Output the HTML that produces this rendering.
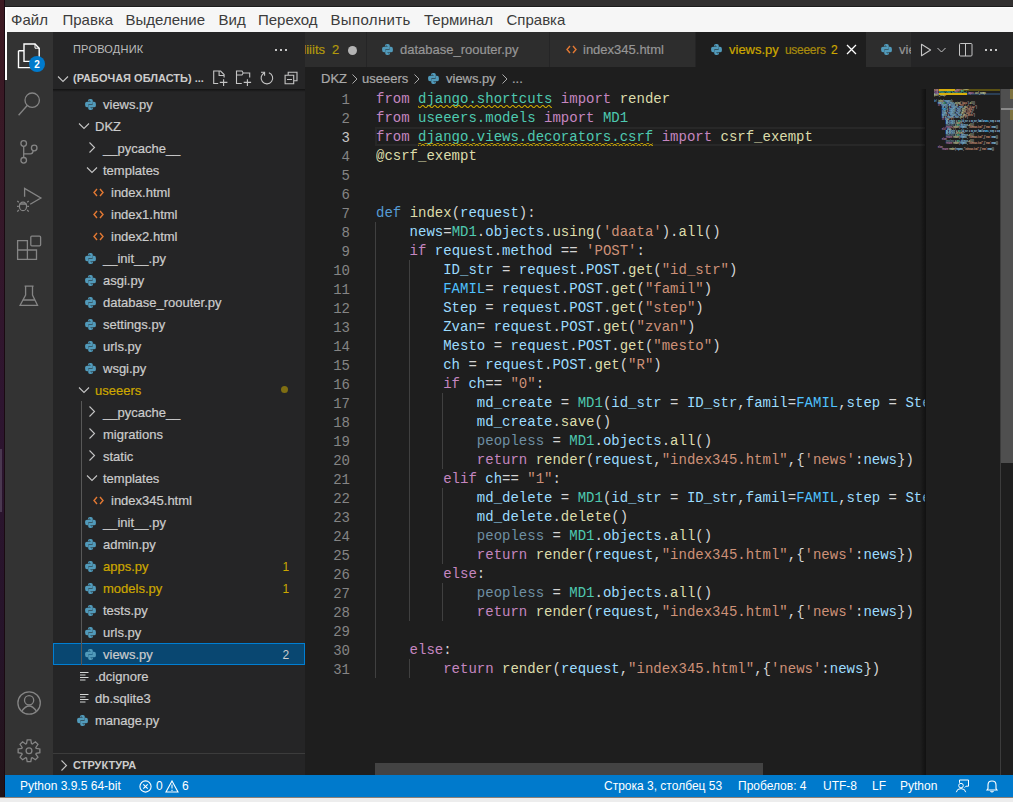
<!DOCTYPE html>
<html><head><meta charset="utf-8">
<style>
*{margin:0;padding:0;box-sizing:border-box}
html,body{width:1013px;height:802px;overflow:hidden;background:#e8e8e8;font-family:"Liberation Sans",sans-serif}
.abs{position:absolute}
.ic{position:absolute}
#leftstrip{left:0;top:0;width:5px;height:797px;background:linear-gradient(#3d1a22 0%,#361828 25%,#2e1530 50%,#26142a 80%,#221317 100%)}
#leftblk{left:0;top:449px;width:1.5px;height:63px;background:#4a3850}
#leftline{left:4px;top:0;width:1px;height:797px;background:#1a0a12}
#topstrip{left:5px;top:0;width:1008px;height:6px;background:#323030}
#topline{left:5px;top:6px;width:1008px;height:1px;background:#1c1c1c}
#menubar{left:5px;top:7px;width:1008px;height:25px;background:#f6f6f6;border-left:2px solid #fff;border-top:1px solid #fdfdfd}
#menubar span{position:absolute;top:3px;font-size:15px;color:#3c3c3c;white-space:nowrap}
#activity{left:5px;top:32px;width:48px;height:743px;background:#333333}
#sidebar{left:53px;top:32px;width:252px;height:743px;background:#252526;color:#cccccc;font-size:13px}
#editor{left:305px;top:32px;width:708px;height:743px;background:#1e1e1e}
#status{left:5px;top:775px;width:1008px;height:22px;background:#007acc;color:#fff;font-size:12px}
#status span{position:absolute;top:4px;white-space:nowrap}
#bottomstrip{left:0;top:797px;width:1013px;height:5px;background:#ededed;border-top:1px solid #8c8178}

#sidebar .hdr{position:absolute;left:20px;top:11px;font-size:11px;color:#bbbbbb;letter-spacing:0.2px}
.dots3{position:absolute;height:3px;width:14px}
.dots3 i{position:absolute;top:0;width:2px;height:2px;background:#c5c5c5}
.dots3 i:nth-child(1){left:0}.dots3 i:nth-child(2){left:5px}.dots3 i:nth-child(3){left:10px}
.wshdr{position:absolute;left:0;top:35px;width:252px;height:22px}
.wst{position:absolute;left:20px;top:5px;font-size:11px;font-weight:bold;color:#cccccc;white-space:nowrap}
.shadow{position:absolute;left:0;top:57px;width:252px;height:3px;background:linear-gradient(#121212,rgba(0,0,0,0))}
.row{position:absolute;left:0;width:252px;height:22px}
.row.sel{background:#094771;outline:1px solid #007fd4;outline-offset:-1px}
.lbl{position:absolute;top:4px;font-size:13px;color:#cccccc;white-space:nowrap;-webkit-text-stroke:0.2px currentColor}
.badge{position:absolute;left:229.5px;top:5px;font-size:12px}
.dot{position:absolute;left:228px;top:7px;width:7px;height:7px;border-radius:50%;background:#7f6e12}
.guide{position:absolute;left:28px;top:369px;width:1px;height:264px;background:#585858}
.panelhdr{position:absolute;left:0;top:721px;width:252px;height:22px;border-top:1px solid #3c3c3c}
.panelhdr span{position:absolute;left:20px;top:5px;font-size:11px;font-weight:bold;color:#cccccc}

#tabbar{position:absolute;left:0;top:0;width:708px;height:35px;background:#252526}
.tab{position:absolute;top:0;height:35px;background:#2d2d2d;overflow:hidden}
.tab.act{background:#1e1e1e}
.tt{position:absolute;top:10px;font-size:13px;color:#969696;white-space:nowrap;-webkit-text-stroke:0.2px currentColor}
.tt.small{font-size:12px;top:11px;letter-spacing:-0.3px}
.mdot{position:absolute;top:14px;width:9px;height:9px;border-radius:50%;background:#b4b4b4}
.actions{position:absolute;left:606px;top:0;width:102px;height:35px;background:#252526}
#crumbs{position:absolute;left:0;top:35px;width:708px;height:22px;background:#1e1e1e}
.cr{position:absolute;top:4px;font-size:13px;color:#a9a9a9;white-space:nowrap;-webkit-text-stroke:0.2px currentColor}
#codearea{position:absolute;left:0;top:57px;width:708px;height:686px;background:#1e1e1e;overflow:hidden}
#gutter{position:absolute;left:0;top:2px;width:45px}
.ln{height:19px;line-height:19px;text-align:right;font-family:"Liberation Mono",monospace;font-size:14px;color:#858585}
.ln.act{color:#c6c6c6}
#code{position:absolute;left:71px;top:1px;width:549px;overflow:hidden;font-family:"Liberation Mono",monospace;font-size:14px;color:#d4d4d4}
.cl{height:19px;line-height:19px;white-space:pre}
#curline{position:absolute;left:70px;top:38px;width:550px;height:19px;border:2px solid #282828;border-right:none}
.iguide{position:absolute;width:1px;background:#404040}
#mmshadow{position:absolute;left:615px;top:0;width:6px;height:686px;background:linear-gradient(90deg,rgba(0,0,0,0) 0,#000 100%);opacity:0.45}
#vscroll{position:absolute;left:695px;top:0;width:13px;height:686px;border-left:1px solid #3c3c3c}
#vscroll .slider{position:absolute;left:0;top:0;width:13px;height:374px;background:#4f4f4f}
#vscroll .ovl1{position:absolute;left:9px;top:0;width:4px;height:10px;background:#7d7240}
#vscroll .ovl2{position:absolute;left:9px;top:21px;width:4px;height:10px;background:#7d7240}
#vscroll .curpos{position:absolute;left:0;top:19px;width:13px;height:2px;background:#8a8a8a}
#hscroll{position:absolute;left:70px;top:674px;width:388px;height:12px;background:#434343}
#mmtext{position:absolute;left:629px;top:0;width:66px;height:70px;overflow:hidden}
.mmin{position:absolute;left:0;top:-0.6px;width:1000px;font-family:"Liberation Mono",monospace;font-size:14px;color:#d4d4d4;transform:scale(0.119,0.2);transform-origin:0 0;-webkit-text-stroke:1px currentColor;opacity:0.85}
.mmin .cl{height:10px;line-height:10px}
</style></head><body>
<div id="leftstrip" class="abs"></div>
<div id="leftline" class="abs"></div>
<div id="leftblk" class="abs"></div>
<div id="topstrip" class="abs"></div>
<div id="topline" class="abs"></div>
<div id="menubar" class="abs">
<span style="left:4px">Файл</span>
<span style="left:55.5px">Правка</span>
<span style="left:118.5px">Выделение</span>
<span style="left:211.5px">Вид</span>
<span style="left:251px">Переход</span>
<span style="left:323.5px;letter-spacing:0.35px">Выполнить</span>
<span style="left:417px">Терминал</span>
<span style="left:499.5px">Справка</span>
</div>

<div id="activity" class="abs">
<div style="position:absolute;left:0;top:0;width:2px;height:48px;background:#ffffff"></div>
<svg style="position:absolute;left:0;top:0" width="48" height="743" viewBox="0 0 48 743">
<g fill="none" stroke="#ffffff" stroke-width="1.4">
<path d="M13.5,18.7 V35.6 H26 M13.5,18.7 H19"/>
<path d="M19,12 H30 L34.2,16.2 V29.4 H19 Z"/>
<path d="M30,12 V16.2 H34.2" stroke-width="1"/>
</g>
<circle cx="32" cy="32" r="8" fill="#007acc"/>
<text x="32" y="35.8" font-family="Liberation Sans" font-size="10" font-weight="bold" fill="#fff" text-anchor="middle">2</text>
<g fill="none" stroke="#858585" stroke-width="1.3">
<circle cx="27.2" cy="68.2" r="7.2"/>
<path d="M22.2,73.5 L13.6,83.3"/>
<circle cx="18.7" cy="111.5" r="2.8"/>
<circle cx="18.7" cy="128.3" r="2.8"/>
<circle cx="29.2" cy="116" r="2.8"/>
<path d="M18.7,114.3 V125.5 M18.7,121.8 H25.5 Q27.7,121.8 28.2,118.8"/>
<path d="M19.6,164.8 V156.4 L35.9,166 L25.2,172.3"/>
<ellipse cx="18" cy="174.4" rx="3.6" ry="4.3"/>
<path d="M13.8,170.3 L12.3,169 M22.2,170.3 L23.7,169 M13.8,174.4 H12 M22.2,174.4 H24 M13.8,178 L12.3,179.6 M22.2,178 L23.7,179.6 M14.5,172 H21.5"/>
<path d="M12.6,208.7 H22.4 V227.3 H12.6 Z M12.6,218 H31.5 V227.3 H22.4"/>
<rect x="25.8" y="204.2" width="9.8" height="9.6" rx="1"/>
<path d="M19.6,254.2 H28.6 M20.6,254.2 V263 L15.1,273.3 H32.5 L27.5,263 V254.2 M17.4,268 H30.3"/>
<circle cx="24.1" cy="671" r="11.2"/>
<circle cx="24.1" cy="668.2" r="4.6"/>
<path d="M16.8,679 Q24.1,669 31.4,679"/>
<path d="M31.19,716.33 L34.85,716.98 L34.85,720.62 L31.19,721.27 L30.83,722.13 L32.96,725.19 L30.39,727.76 L27.33,725.63 L26.47,725.99 L25.82,729.65 L22.18,729.65 L21.53,725.99 L20.67,725.63 L17.61,727.76 L15.04,725.19 L17.17,722.13 L16.81,721.27 L13.15,720.62 L13.15,716.98 L16.81,716.33 L17.17,715.47 L15.04,712.41 L17.61,709.84 L20.67,711.97 L21.53,711.61 L22.18,707.95 L25.82,707.95 L26.47,711.61 L27.33,711.97 L30.39,709.84 L32.96,712.41 L30.83,715.47 Z"/>
<circle cx="24" cy="718.8" r="2.9"/>
</g>
</svg>
</div>

<div id="sidebar" class="abs">
<svg width="0" height="0" style="position:absolute">
<defs>
<g id="pyi"><path d="M4.8,0 H6 Q7.8,0 7.8,1.8 V4.2 Q7.8,5.3 6.7,5.3 H4.3 Q3.1,5.3 3.1,6.5 V8.2 H2 Q0.1,8.2 0.1,6 V4.6 Q0.1,2.7 2,2.7 H5.6 V2.3 H3 V1.8 Q3,0 4.8,0 Z" fill="#519aba"/><path d="M4.8,0 H6 Q7.8,0 7.8,1.8 V4.2 Q7.8,5.3 6.7,5.3 H4.3 Q3.1,5.3 3.1,6.5 V8.2 H2 Q0.1,8.2 0.1,6 V4.6 Q0.1,2.7 2,2.7 H5.6 V2.3 H3 V1.8 Q3,0 4.8,0 Z" fill="#519aba" transform="rotate(180 5.5 5.5)"/><circle cx="4.3" cy="1.2" r="0.5" fill="#2f5f78"/><circle cx="6.7" cy="9.8" r="0.5" fill="#2f5f78"/></g>
<g id="htmli"><path d="M4,1 L1,4.5 L4,8 M7,1 L10,4.5 L7,8" fill="none" stroke="#e37933" stroke-width="1.4"/></g>
<g id="linesi"><path d="M0,0.5 H8.5 M0,3 H5.5 M0,5.5 H8.5 M0,8 H5.5" fill="none" stroke="#d4d7d6" stroke-width="1"/></g>
<g id="chd"><path d="M1,2.5 L6,7.5 L11,2.5" fill="none" stroke="#c5c5c5" stroke-width="1.1"/></g>
<g id="chr"><path d="M1.5,0.5 L6.5,5.5 L1.5,10.5" fill="none" stroke="#c5c5c5" stroke-width="1.1"/></g>
</defs></svg>
<div class="hdr">ПРОВОДНИК</div>
<div class="dots3" style="left:222px;top:17px"><i></i><i></i><i></i></div>
<div class="wshdr">
<svg class="ic" style="left:4px;top:8px" width="12" height="8" viewBox="0 0 12 8"><path d="M1,1.5 L6,6.5 L11,1.5" fill="none" stroke="#c5c5c5" stroke-width="1.1"/></svg>
<span class="wst">(РАБОЧАЯ ОБЛАСТЬ) ...</span>
<svg class="ic" style="left:158px;top:3px" width="90" height="17" viewBox="0 0 90 17">
<g fill="none" stroke="#c5c5c5" stroke-width="1.1">
<path d="M7.2,13.5 H2.7 V1 H9.6 L13.1,4.5 V7.5 M8.1,1 V5.5 H13.1 M8.8,12.4 H16.4 M12.6,9.3 V16"/>
<path d="M30.8,13.5 H25.5 V1 H31 L32.2,3 H38.7 V7.5 M25.5,5 H31 L32.2,3 M32.7,12.4 H40.1 M36.4,9.3 V16"/>
<path d="M57.9,2.65 A5.8,5.8 0 1 1 53.6,2.76 M50,2.3 H53.6 V5.7"/>
<path d="M77.2,4.7 V2.2 H86 V10.7 H83 M74.1,5.2 H82.7 V13.8 H74.1 Z M76,9.5 H81"/>
</g></svg>
</div>
<div class="shadow"></div>
<div id="tree">
<div class="row" style="top:61px"><svg class="ic" style="left:32px;top:6px" width="11" height="11" viewBox="0 0 11 11"><use href="#pyi"/></svg><span class="lbl" style="left:50px"><span>views.py</span></span></div>
<div class="row" style="top:83px"><svg class="ic" style="left:25px;top:6px" width="12" height="10" viewBox="0 0 12 10"><use href="#chd"/></svg><span class="lbl" style="left:42px"><span>DKZ</span></span></div>
<div class="row" style="top:105px"><svg class="ic" style="left:35px;top:5px" width="8" height="12" viewBox="0 0 8 12"><use href="#chr"/></svg><span class="lbl" style="left:50px"><span>__pycache__</span></span></div>
<div class="row" style="top:127px"><svg class="ic" style="left:33px;top:6px" width="12" height="10" viewBox="0 0 12 10"><use href="#chd"/></svg><span class="lbl" style="left:50px"><span>templates</span></span></div>
<div class="row" style="top:149px"><svg class="ic" style="left:40px;top:7px" width="11" height="9" viewBox="0 0 11 9"><use href="#htmli"/></svg><span class="lbl" style="left:58px"><span>index.html</span></span></div>
<div class="row" style="top:171px"><svg class="ic" style="left:40px;top:7px" width="11" height="9" viewBox="0 0 11 9"><use href="#htmli"/></svg><span class="lbl" style="left:58px"><span>index1.html</span></span></div>
<div class="row" style="top:193px"><svg class="ic" style="left:40px;top:7px" width="11" height="9" viewBox="0 0 11 9"><use href="#htmli"/></svg><span class="lbl" style="left:58px"><span>index2.html</span></span></div>
<div class="row" style="top:215px"><svg class="ic" style="left:32px;top:6px" width="11" height="11" viewBox="0 0 11 11"><use href="#pyi"/></svg><span class="lbl" style="left:50px"><span>__init__.py</span></span></div>
<div class="row" style="top:237px"><svg class="ic" style="left:32px;top:6px" width="11" height="11" viewBox="0 0 11 11"><use href="#pyi"/></svg><span class="lbl" style="left:50px"><span>asgi.py</span></span></div>
<div class="row" style="top:259px"><svg class="ic" style="left:32px;top:6px" width="11" height="11" viewBox="0 0 11 11"><use href="#pyi"/></svg><span class="lbl" style="left:50px"><span>database_roouter.py</span></span></div>
<div class="row" style="top:281px"><svg class="ic" style="left:32px;top:6px" width="11" height="11" viewBox="0 0 11 11"><use href="#pyi"/></svg><span class="lbl" style="left:50px"><span>settings.py</span></span></div>
<div class="row" style="top:303px"><svg class="ic" style="left:32px;top:6px" width="11" height="11" viewBox="0 0 11 11"><use href="#pyi"/></svg><span class="lbl" style="left:50px"><span>urls.py</span></span></div>
<div class="row" style="top:325px"><svg class="ic" style="left:32px;top:6px" width="11" height="11" viewBox="0 0 11 11"><use href="#pyi"/></svg><span class="lbl" style="left:50px"><span>wsgi.py</span></span></div>
<div class="row" style="top:347px"><svg class="ic" style="left:25px;top:6px" width="12" height="10" viewBox="0 0 12 10"><use href="#chd"/></svg><span class="lbl" style="left:42px"><span style="color:#cca700">useeers</span></span><div class="dot"></div></div>
<div class="row" style="top:369px"><svg class="ic" style="left:35px;top:5px" width="8" height="12" viewBox="0 0 8 12"><use href="#chr"/></svg><span class="lbl" style="left:50px"><span>__pycache__</span></span></div>
<div class="row" style="top:391px"><svg class="ic" style="left:35px;top:5px" width="8" height="12" viewBox="0 0 8 12"><use href="#chr"/></svg><span class="lbl" style="left:50px"><span>migrations</span></span></div>
<div class="row" style="top:413px"><svg class="ic" style="left:35px;top:5px" width="8" height="12" viewBox="0 0 8 12"><use href="#chr"/></svg><span class="lbl" style="left:50px"><span>static</span></span></div>
<div class="row" style="top:435px"><svg class="ic" style="left:33px;top:6px" width="12" height="10" viewBox="0 0 12 10"><use href="#chd"/></svg><span class="lbl" style="left:50px"><span>templates</span></span></div>
<div class="row" style="top:457px"><svg class="ic" style="left:40px;top:7px" width="11" height="9" viewBox="0 0 11 9"><use href="#htmli"/></svg><span class="lbl" style="left:58px"><span>index345.html</span></span></div>
<div class="row" style="top:479px"><svg class="ic" style="left:32px;top:6px" width="11" height="11" viewBox="0 0 11 11"><use href="#pyi"/></svg><span class="lbl" style="left:50px"><span>__init__.py</span></span></div>
<div class="row" style="top:501px"><svg class="ic" style="left:32px;top:6px" width="11" height="11" viewBox="0 0 11 11"><use href="#pyi"/></svg><span class="lbl" style="left:50px"><span>admin.py</span></span></div>
<div class="row" style="top:523px"><svg class="ic" style="left:32px;top:6px" width="11" height="11" viewBox="0 0 11 11"><use href="#pyi"/></svg><span class="lbl" style="left:50px"><span style="color:#cca700">apps.py</span></span><span class="badge" style="color:#cca700">1</span></div>
<div class="row" style="top:545px"><svg class="ic" style="left:32px;top:6px" width="11" height="11" viewBox="0 0 11 11"><use href="#pyi"/></svg><span class="lbl" style="left:50px"><span style="color:#cca700">models.py</span></span><span class="badge" style="color:#cca700">1</span></div>
<div class="row" style="top:567px"><svg class="ic" style="left:32px;top:6px" width="11" height="11" viewBox="0 0 11 11"><use href="#pyi"/></svg><span class="lbl" style="left:50px"><span>tests.py</span></span></div>
<div class="row" style="top:589px"><svg class="ic" style="left:32px;top:6px" width="11" height="11" viewBox="0 0 11 11"><use href="#pyi"/></svg><span class="lbl" style="left:50px"><span>urls.py</span></span></div>
<div class="row sel" style="top:611px"><svg class="ic" style="left:32px;top:6px" width="11" height="11" viewBox="0 0 11 11"><use href="#pyi"/></svg><span class="lbl" style="left:50px"><span>views.py</span></span><span class="badge" style="color:#cccccc">2</span></div>
<div class="row" style="top:633px"><svg class="ic" style="left:27px;top:7px" width="9" height="9" viewBox="0 0 9 9"><use href="#linesi"/></svg><span class="lbl" style="left:42px"><span>.dcignore</span></span></div>
<div class="row" style="top:655px"><svg class="ic" style="left:27px;top:7px" width="9" height="9" viewBox="0 0 9 9"><use href="#linesi"/></svg><span class="lbl" style="left:42px"><span>db.sqlite3</span></span></div>
<div class="row" style="top:677px"><svg class="ic" style="left:24px;top:6px" width="11" height="11" viewBox="0 0 11 11"><use href="#pyi"/></svg><span class="lbl" style="left:42px"><span>manage.py</span></span></div>
<div class="guide"></div>
</div>
<div class="panelhdr"><svg class="ic" style="left:6.5px;top:5.5px" width="8" height="12" viewBox="0 0 8 12"><use href="#chr"/></svg><span>СТРУКТУРА</span></div>
</div>

<div id="editor" class="abs">
<div id="tabbar">
<div class="tab" style="left:0;width:61px"><span class="tt" style="left:-6px;color:#b39a0c">diiits</span><span class="tt" style="left:27px;color:#b39a0c">2</span><div class="mdot" style="left:43px"></div></div>
<div class="tab" style="left:62px;width:182px"><svg class="ic" style="left:15px;top:12px" width="11" height="11" viewBox="0 0 11 11"><use href="#pyi"/></svg><span class="tt" style="left:33px">database_roouter.py</span></div>
<div class="tab" style="left:245px;width:145px"><svg class="ic" style="left:16px;top:13px" width="11" height="9" viewBox="0 0 11 9"><use href="#htmli"/></svg><span class="tt" style="left:33px">index345.html</span></div>
<div class="tab act" style="left:391px;width:170px"><svg class="ic" style="left:15px;top:12px" width="11" height="11" viewBox="0 0 11 11"><use href="#pyi"/></svg><span class="tt" style="left:33px;color:#cca700">views.py</span><span class="tt small" style="left:89px;color:#a88b0d">useeers</span><span class="tt" style="left:135px;color:#cca700;font-size:12px;top:11px">2</span>
<svg class="ic" style="left:150px;top:12px" width="11" height="11" viewBox="0 0 11 11"><path d="M1,1 L10,10 M10,1 L1,10" stroke="#ffffff" stroke-width="1.3"/></svg></div>
<div class="tab" style="left:561px;width:45px"><svg class="ic" style="left:15px;top:12px" width="11" height="11" viewBox="0 0 11 11"><use href="#pyi"/></svg><span class="tt" style="left:33px">views.py</span></div>
<div class="actions">
<svg class="ic" style="left:9px;top:11px" width="12" height="14" viewBox="0 0 12 14"><path d="M1.5,1.3 L10.6,7 L1.5,12.7 Z" fill="none" stroke="#c5c5c5" stroke-width="1.1" stroke-linejoin="round"/></svg>
<svg class="ic" style="left:26px;top:15px" width="9" height="6" viewBox="0 0 9 6"><path d="M0.5,1 L4.5,5 L8.5,1" fill="none" stroke="#c5c5c5" stroke-width="1"/></svg>
<svg class="ic" style="left:48px;top:11px" width="14" height="14" viewBox="0 0 14 14"><rect x="0.5" y="0.5" width="12.5" height="12.5" rx="1" fill="none" stroke="#c5c5c5" stroke-width="1"/><path d="M6.5,1 V13" stroke="#c5c5c5" stroke-width="1"/></svg>
<div class="dots3" style="left:74px;top:17px"><i></i><i></i><i></i></div>
</div>
</div>
<div id="crumbs">
<span class="cr" style="left:16px">DKZ</span>
<svg class="ic" style="left:47px;top:7px" width="6" height="10" viewBox="0 0 6 10"><path d="M0.5,0.5 L5,5 L0.5,9.5" fill="none" stroke="#a9a9a9" stroke-width="1"/></svg>
<span class="cr" style="left:57px">useeers</span>
<svg class="ic" style="left:109px;top:7px" width="6" height="10" viewBox="0 0 6 10"><path d="M0.5,0.5 L5,5 L0.5,9.5" fill="none" stroke="#a9a9a9" stroke-width="1"/></svg>
<svg class="ic" style="left:123px;top:6px" width="11" height="11" viewBox="0 0 11 11"><use href="#pyi"/></svg>
<span class="cr" style="left:141px">views.py</span>
<svg class="ic" style="left:197px;top:7px" width="6" height="10" viewBox="0 0 6 10"><path d="M0.5,0.5 L5,5 L0.5,9.5" fill="none" stroke="#a9a9a9" stroke-width="1"/></svg>
<span class="cr" style="left:207px">...</span>
</div>
<div id="codearea">
<div id="curline"></div>
<div id="gutter"><div class="ln">1</div><div class="ln">2</div><div class="ln act">3</div><div class="ln">4</div><div class="ln">5</div><div class="ln">6</div><div class="ln">7</div><div class="ln">8</div><div class="ln">9</div><div class="ln">10</div><div class="ln">11</div><div class="ln">12</div><div class="ln">13</div><div class="ln">14</div><div class="ln">15</div><div class="ln">16</div><div class="ln">17</div><div class="ln">18</div><div class="ln">19</div><div class="ln">20</div><div class="ln">21</div><div class="ln">22</div><div class="ln">23</div><div class="ln">24</div><div class="ln">25</div><div class="ln">26</div><div class="ln">27</div><div class="ln">28</div><div class="ln">29</div><div class="ln">30</div><div class="ln">31</div></div>
<div class="iguide" style="left:70px;top:133px;height:456px"></div>
<div class="iguide" style="left:104px;top:171px;height:361px"></div>
<div class="iguide" style="left:104px;top:570px;height:19px"></div>
<div class="iguide" style="left:137px;top:304px;height:76px"></div>
<div class="iguide" style="left:137px;top:399px;height:76px"></div>
<div class="iguide" style="left:137px;top:494px;height:38px"></div>
<div id="code"><div class="cl"><span style="color:#c586c0">from</span> <span style="color:#4ec9b0">django.shortcuts</span> <span style="color:#c586c0">import</span> <span style="color:#dcdcaa">render</span></div><div class="cl"><span style="color:#c586c0">from</span> <span style="color:#4ec9b0">useeers.models</span> <span style="color:#c586c0">import</span> <span style="color:#4ec9b0">MD1</span></div><div class="cl"><span style="color:#c586c0">from</span> <span style="color:#4ec9b0">django.views.decorators.csrf</span> <span style="color:#c586c0">import</span> <span style="color:#dcdcaa">csrf_exempt</span></div><div class="cl"><span style="color:#dcdcaa">@csrf_exempt</span></div><div class="cl"></div><div class="cl"></div><div class="cl"><span style="color:#569cd6">def</span> <span style="color:#dcdcaa">index</span>(<span style="color:#9cdcfe">request</span>):</div><div class="cl">    <span style="color:#9cdcfe">news</span>=<span style="color:#4ec9b0">MD1</span>.<span style="color:#9cdcfe">objects</span>.<span style="color:#dcdcaa">using</span>(<span style="color:#ce9178">&#x27;daata&#x27;</span>).<span style="color:#dcdcaa">all</span>()</div><div class="cl">    <span style="color:#c586c0">if</span> <span style="color:#9cdcfe">request</span>.<span style="color:#9cdcfe">method</span> == <span style="color:#ce9178">&#x27;POST&#x27;</span>:</div><div class="cl">        <span style="color:#9cdcfe">ID_str</span> = <span style="color:#9cdcfe">request</span>.<span style="color:#9cdcfe">POST</span>.<span style="color:#dcdcaa">get</span>(<span style="color:#ce9178">&quot;id_str&quot;</span>)</div><div class="cl">        <span style="color:#4fc1ff">FAMIL</span>= <span style="color:#9cdcfe">request</span>.<span style="color:#9cdcfe">POST</span>.<span style="color:#dcdcaa">get</span>(<span style="color:#ce9178">&quot;famil&quot;</span>)</div><div class="cl">        <span style="color:#9cdcfe">Step</span> = <span style="color:#9cdcfe">request</span>.<span style="color:#9cdcfe">POST</span>.<span style="color:#dcdcaa">get</span>(<span style="color:#ce9178">&quot;step&quot;</span>)</div><div class="cl">        <span style="color:#9cdcfe">Zvan</span>= <span style="color:#9cdcfe">request</span>.<span style="color:#9cdcfe">POST</span>.<span style="color:#dcdcaa">get</span>(<span style="color:#ce9178">&quot;zvan&quot;</span>)</div><div class="cl">        <span style="color:#9cdcfe">Mesto</span> = <span style="color:#9cdcfe">request</span>.<span style="color:#9cdcfe">POST</span>.<span style="color:#dcdcaa">get</span>(<span style="color:#ce9178">&quot;mesto&quot;</span>)</div><div class="cl">        <span style="color:#9cdcfe">ch</span> = <span style="color:#9cdcfe">request</span>.<span style="color:#9cdcfe">POST</span>.<span style="color:#dcdcaa">get</span>(<span style="color:#ce9178">&quot;R&quot;</span>)</div><div class="cl">        <span style="color:#c586c0">if</span> <span style="color:#9cdcfe">ch</span>== <span style="color:#ce9178">&quot;0&quot;</span>:</div><div class="cl">            <span style="color:#9cdcfe">md_create</span> = <span style="color:#4ec9b0">MD1</span>(<span style="color:#9cdcfe">id_str</span> = <span style="color:#9cdcfe">ID_str</span>,<span style="color:#9cdcfe">famil</span>=<span style="color:#4fc1ff">FAMIL</span>,<span style="color:#9cdcfe">step</span> = <span style="color:#9cdcfe">Step</span>,<span style="color:#9cdcfe">zvan</span></div><div class="cl">            <span style="color:#9cdcfe">md_create</span>.<span style="color:#dcdcaa">save</span>()</div><div class="cl">            <span style="color:#6e8fa3">peopless</span> = <span style="color:#4ec9b0">MD1</span>.<span style="color:#9cdcfe">objects</span>.<span style="color:#dcdcaa">all</span>()</div><div class="cl">            <span style="color:#c586c0">return</span> <span style="color:#dcdcaa">render</span>(<span style="color:#9cdcfe">request</span>,<span style="color:#ce9178">&quot;index345.html&quot;</span>,{<span style="color:#ce9178">&#x27;news&#x27;</span>:<span style="color:#9cdcfe">news</span>})</div><div class="cl">        <span style="color:#c586c0">elif</span> <span style="color:#9cdcfe">ch</span>== <span style="color:#ce9178">&quot;1&quot;</span>:</div><div class="cl">            <span style="color:#9cdcfe">md_delete</span> = <span style="color:#4ec9b0">MD1</span>(<span style="color:#9cdcfe">id_str</span> = <span style="color:#9cdcfe">ID_str</span>,<span style="color:#9cdcfe">famil</span>=<span style="color:#4fc1ff">FAMIL</span>,<span style="color:#9cdcfe">step</span> = <span style="color:#9cdcfe">Step</span>,<span style="color:#9cdcfe">zvan</span></div><div class="cl">            <span style="color:#9cdcfe">md_delete</span>.<span style="color:#dcdcaa">delete</span>()</div><div class="cl">            <span style="color:#6e8fa3">peopless</span> = <span style="color:#4ec9b0">MD1</span>.<span style="color:#9cdcfe">objects</span>.<span style="color:#dcdcaa">all</span>()</div><div class="cl">            <span style="color:#c586c0">return</span> <span style="color:#dcdcaa">render</span>(<span style="color:#9cdcfe">request</span>,<span style="color:#ce9178">&quot;index345.html&quot;</span>,{<span style="color:#ce9178">&#x27;news&#x27;</span>:<span style="color:#9cdcfe">news</span>})</div><div class="cl">        <span style="color:#c586c0">else</span>:</div><div class="cl">            <span style="color:#6e8fa3">peopless</span> = <span style="color:#4ec9b0">MD1</span>.<span style="color:#9cdcfe">objects</span>.<span style="color:#dcdcaa">all</span>()</div><div class="cl">            <span style="color:#c586c0">return</span> <span style="color:#dcdcaa">render</span>(<span style="color:#9cdcfe">request</span>,<span style="color:#ce9178">&quot;index345.html&quot;</span>,{<span style="color:#ce9178">&#x27;news&#x27;</span>:<span style="color:#9cdcfe">news</span>})</div><div class="cl"></div><div class="cl">    <span style="color:#c586c0">else</span>:</div><div class="cl">        <span style="color:#c586c0">return</span> <span style="color:#dcdcaa">render</span>(<span style="color:#9cdcfe">request</span>,<span style="color:#ce9178">&quot;index345.html&quot;</span>,{<span style="color:#ce9178">&#x27;news&#x27;</span>:<span style="color:#9cdcfe">news</span>})</div></div>
<svg class="ic" style="left:0;top:0" width="708" height="100"><defs><pattern id="sqp" patternUnits="userSpaceOnUse" x="113" y="16" width="6" height="3"><polygon points="5.5,0 2.5,3 1.1,3 4.1,0" fill="#cca700"/><polygon points="4,0 6,2 6,0.6 5.4,0" fill="#cca700"/><polygon points="0,2 1,3 2.4,3 0,0.6" fill="#cca700"/></pattern></defs><rect x="113" y="16" width="134" height="3" fill="url(#sqp)"/><rect x="113" y="54" width="235" height="3" fill="url(#sqp)"/></svg>
<svg class="ic" style="left:0;top:0" width="708" height="100"><rect x="629" y="0" width="66" height="2" fill="#5b5214"/><rect x="629" y="4" width="66" height="2" fill="#2b3f55"/></svg>
<div id="mmtext"><div class="mmin"><div class="cl"><span style="color:#c586c0">from</span> <span style="color:#4ec9b0">django.shortcuts</span> <span style="color:#c586c0">import</span> <span style="color:#dcdcaa">render</span></div><div class="cl"><span style="color:#c586c0">from</span> <span style="color:#4ec9b0">useeers.models</span> <span style="color:#c586c0">import</span> <span style="color:#4ec9b0">MD1</span></div><div class="cl"><span style="color:#c586c0">from</span> <span style="color:#4ec9b0">django.views.decorators.csrf</span> <span style="color:#c586c0">import</span> <span style="color:#dcdcaa">csrf_exempt</span></div><div class="cl"><span style="color:#dcdcaa">@csrf_exempt</span></div><div class="cl"></div><div class="cl"></div><div class="cl"><span style="color:#569cd6">def</span> <span style="color:#dcdcaa">index</span>(<span style="color:#9cdcfe">request</span>):</div><div class="cl">    <span style="color:#9cdcfe">news</span>=<span style="color:#4ec9b0">MD1</span>.<span style="color:#9cdcfe">objects</span>.<span style="color:#dcdcaa">using</span>(<span style="color:#ce9178">&#x27;daata&#x27;</span>).<span style="color:#dcdcaa">all</span>()</div><div class="cl">    <span style="color:#c586c0">if</span> <span style="color:#9cdcfe">request</span>.<span style="color:#9cdcfe">method</span> == <span style="color:#ce9178">&#x27;POST&#x27;</span>:</div><div class="cl">        <span style="color:#9cdcfe">ID_str</span> = <span style="color:#9cdcfe">request</span>.<span style="color:#9cdcfe">POST</span>.<span style="color:#dcdcaa">get</span>(<span style="color:#ce9178">&quot;id_str&quot;</span>)</div><div class="cl">        <span style="color:#4fc1ff">FAMIL</span>= <span style="color:#9cdcfe">request</span>.<span style="color:#9cdcfe">POST</span>.<span style="color:#dcdcaa">get</span>(<span style="color:#ce9178">&quot;famil&quot;</span>)</div><div class="cl">        <span style="color:#9cdcfe">Step</span> = <span style="color:#9cdcfe">request</span>.<span style="color:#9cdcfe">POST</span>.<span style="color:#dcdcaa">get</span>(<span style="color:#ce9178">&quot;step&quot;</span>)</div><div class="cl">        <span style="color:#9cdcfe">Zvan</span>= <span style="color:#9cdcfe">request</span>.<span style="color:#9cdcfe">POST</span>.<span style="color:#dcdcaa">get</span>(<span style="color:#ce9178">&quot;zvan&quot;</span>)</div><div class="cl">        <span style="color:#9cdcfe">Mesto</span> = <span style="color:#9cdcfe">request</span>.<span style="color:#9cdcfe">POST</span>.<span style="color:#dcdcaa">get</span>(<span style="color:#ce9178">&quot;mesto&quot;</span>)</div><div class="cl">        <span style="color:#9cdcfe">ch</span> = <span style="color:#9cdcfe">request</span>.<span style="color:#9cdcfe">POST</span>.<span style="color:#dcdcaa">get</span>(<span style="color:#ce9178">&quot;R&quot;</span>)</div><div class="cl">        <span style="color:#c586c0">if</span> <span style="color:#9cdcfe">ch</span>== <span style="color:#ce9178">&quot;0&quot;</span>:</div><div class="cl">            <span style="color:#9cdcfe">md_create</span> = <span style="color:#4ec9b0">MD1</span>(<span style="color:#9cdcfe">id_str</span> = <span style="color:#9cdcfe">ID_str</span>,<span style="color:#9cdcfe">famil</span>=<span style="color:#4fc1ff">FAMIL</span>,<span style="color:#9cdcfe">step</span> = <span style="color:#9cdcfe">Step</span>,<span style="color:#9cdcfe">zvan</span></div><div class="cl">            <span style="color:#9cdcfe">md_create</span>.<span style="color:#dcdcaa">save</span>()</div><div class="cl">            <span style="color:#6e8fa3">peopless</span> = <span style="color:#4ec9b0">MD1</span>.<span style="color:#9cdcfe">objects</span>.<span style="color:#dcdcaa">all</span>()</div><div class="cl">            <span style="color:#c586c0">return</span> <span style="color:#dcdcaa">render</span>(<span style="color:#9cdcfe">request</span>,<span style="color:#ce9178">&quot;index345.html&quot;</span>,{<span style="color:#ce9178">&#x27;news&#x27;</span>:<span style="color:#9cdcfe">news</span>})</div><div class="cl">        <span style="color:#c586c0">elif</span> <span style="color:#9cdcfe">ch</span>== <span style="color:#ce9178">&quot;1&quot;</span>:</div><div class="cl">            <span style="color:#9cdcfe">md_delete</span> = <span style="color:#4ec9b0">MD1</span>(<span style="color:#9cdcfe">id_str</span> = <span style="color:#9cdcfe">ID_str</span>,<span style="color:#9cdcfe">famil</span>=<span style="color:#4fc1ff">FAMIL</span>,<span style="color:#9cdcfe">step</span> = <span style="color:#9cdcfe">Step</span>,<span style="color:#9cdcfe">zvan</span></div><div class="cl">            <span style="color:#9cdcfe">md_delete</span>.<span style="color:#dcdcaa">delete</span>()</div><div class="cl">            <span style="color:#6e8fa3">peopless</span> = <span style="color:#4ec9b0">MD1</span>.<span style="color:#9cdcfe">objects</span>.<span style="color:#dcdcaa">all</span>()</div><div class="cl">            <span style="color:#c586c0">return</span> <span style="color:#dcdcaa">render</span>(<span style="color:#9cdcfe">request</span>,<span style="color:#ce9178">&quot;index345.html&quot;</span>,{<span style="color:#ce9178">&#x27;news&#x27;</span>:<span style="color:#9cdcfe">news</span>})</div><div class="cl">        <span style="color:#c586c0">else</span>:</div><div class="cl">            <span style="color:#6e8fa3">peopless</span> = <span style="color:#4ec9b0">MD1</span>.<span style="color:#9cdcfe">objects</span>.<span style="color:#dcdcaa">all</span>()</div><div class="cl">            <span style="color:#c586c0">return</span> <span style="color:#dcdcaa">render</span>(<span style="color:#9cdcfe">request</span>,<span style="color:#ce9178">&quot;index345.html&quot;</span>,{<span style="color:#ce9178">&#x27;news&#x27;</span>:<span style="color:#9cdcfe">news</span>})</div><div class="cl"></div><div class="cl">    <span style="color:#c586c0">else</span>:</div><div class="cl">        <span style="color:#c586c0">return</span> <span style="color:#dcdcaa">render</span>(<span style="color:#9cdcfe">request</span>,<span style="color:#ce9178">&quot;index345.html&quot;</span>,{<span style="color:#ce9178">&#x27;news&#x27;</span>:<span style="color:#9cdcfe">news</span>})</div></div></div>
<svg class="ic" style="left:0;top:0" width="708" height="100"><rect x="634" y="0" width="16" height="2" fill="#d9ae0b"/><rect x="634" y="4" width="28" height="2" fill="#d9ae0b"/></svg>
<div id="mmshadow"></div>
<div id="vscroll"><div class="slider"></div><div class="ovl1"></div><div class="ovl2"></div><div class="curpos"></div></div>
<div id="hscroll"></div>
</div>
</div>

<div id="status" class="abs">
<span style="left:15px">Python 3.9.5 64-bit</span>
<svg class="ic" style="left:134px;top:5px" width="13" height="13" viewBox="0 0 13 13"><circle cx="6.5" cy="6.5" r="5.6" fill="none" stroke="#fff" stroke-width="1.1"/><path d="M4.3,4.3 L8.7,8.7 M8.7,4.3 L4.3,8.7" stroke="#fff" stroke-width="1.1"/></svg>
<span style="left:151px">0</span>
<svg class="ic" style="left:160px;top:5px" width="14" height="13" viewBox="0 0 14 13"><path d="M7,1 L13,12 H1 Z" fill="none" stroke="#fff" stroke-width="1.1"/><path d="M7,4.5 V8.5 M7,9.8 V11" stroke="#fff" stroke-width="1.1"/></svg>
<span style="left:177px">6</span>
<span style="left:599px">Строка 3, столбец 53</span>
<span style="left:733px">Пробелов: 4</span>
<span style="left:818px">UTF-8</span>
<span style="left:867px">LF</span>
<span style="left:895px">Python</span>
<svg class="ic" style="left:950px;top:4px" width="15" height="15" viewBox="0 0 15 15"><g fill="none" stroke="#fff" stroke-width="1"><path d="M4.5,3.8 V1 H13.5 V7.2 H11 L9.6,8.6"/><circle cx="6" cy="6.6" r="2.3"/><path d="M1.3,13.2 Q1.8,9.6 6,9.6 Q10.2,9.6 10.7,13.2"/></g></svg>
<svg class="ic" style="left:980px;top:4px" width="14" height="14" viewBox="0 0 14 14"><g fill="none" stroke="#fff" stroke-width="1.1"><path d="M2,11 H12 L11,9.5 V6 Q11,2 7,2 Q3,2 3,6 V9.5 Z"/><path d="M5.5,12 Q7,14 8.5,12"/></g></svg>
</div>
<div id="bottomstrip" class="abs"></div>
</body></html>
